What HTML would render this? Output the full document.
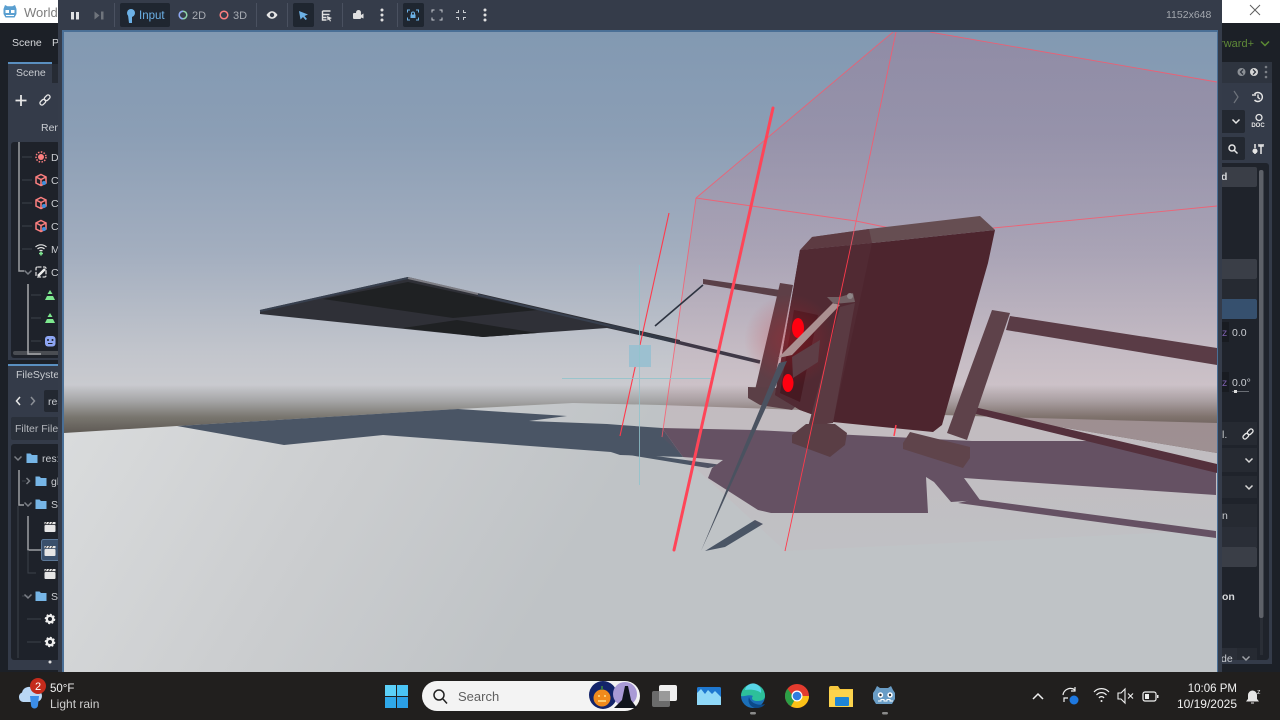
<!DOCTYPE html>
<html><head><meta charset="utf-8"><style>
html,body{margin:0;padding:0;background:#1c2027;width:1280px;height:720px;overflow:hidden}
svg{display:block;position:absolute;left:0;top:0}
text{font-family:"Liberation Sans","DejaVu Sans",sans-serif}
</style></head><body>
<svg width="1280" height="720" viewBox="0 0 1280 720" xmlns="http://www.w3.org/2000/svg">
<defs>
<linearGradient id="sky" x1="0" y1="32" x2="0" y2="433" gradientUnits="userSpaceOnUse">
<stop offset="0" stop-color="#8299b2"/><stop offset=".25" stop-color="#8b9eb5"/><stop offset=".55" stop-color="#a3aebf"/><stop offset=".8" stop-color="#c2c5cc"/><stop offset=".88" stop-color="#c9cacf"/><stop offset=".92" stop-color="#a5a5a6"/><stop offset=".96" stop-color="#79766f"/><stop offset="1" stop-color="#5e5954"/>
</linearGradient>
<linearGradient id="ground" x1="64" y1="410" x2="500" y2="672" gradientUnits="userSpaceOnUse">
<stop offset="0" stop-color="#dadcdd"/><stop offset=".55" stop-color="#cbcdcf"/><stop offset="1" stop-color="#bfc3c6"/>
</linearGradient>
<linearGradient id="tint" x1="0" y1="32" x2="0" y2="551" gradientUnits="userSpaceOnUse">
<stop offset="0" stop-color="#ff2040" stop-opacity=".11"/><stop offset=".7" stop-color="#ff2040" stop-opacity=".05"/><stop offset="1" stop-color="#ff2040" stop-opacity=".015"/>
</linearGradient>
<radialGradient id="glow" cx="790" cy="340" r="46" gradientUnits="userSpaceOnUse">
<stop offset="0" stop-color="#c8202a" stop-opacity=".35"/><stop offset="1" stop-color="#c8202a" stop-opacity="0"/>
</radialGradient>
<clipPath id="vp"><rect x="64" y="32" width="1153" height="640"/></clipPath>
<g id="gear"><circle r="3.2" fill="none" stroke="#eee" stroke-width="2.4"/><circle r="4.5" fill="none" stroke="#eee" stroke-width="1.6" stroke-dasharray="1.8 1.7"/></g>
<g id="clap"><rect x="-5.5" y="-2" width="11" height="7" rx="1" fill="#e6e6e6"/><path d="M-5.5-5h11v2.2h-11z" fill="#e6e6e6"/><path d="M-3.5-5l-1 2.2M-.5-5l-1 2.2M2.5-5l-1 2.2" stroke="#333" stroke-width=".9"/></g>
<g id="cube"><path d="M0-5.5L5-3V3L0 5.5-5 3V-3Z M-5-3L0-.5 5-3M0-.5V5.5" fill="none" stroke="#fc7f7f" stroke-width="1.5"/><circle cx="3" cy="3" r="2" fill="#3f8fdc"/></g>
<path id="folder" d="M-5.5-4.500h4l1.500 1.500h5.500v8h-11z" fill="#76b5e6"/>
<path id="chev" d="M-3.500-1.500L0 2 3.500-1.500" fill="none" stroke-width="1.500"/>
<g id="link" fill="none" stroke="#e6e6e6" stroke-width="1.300"><rect x="-5.500" y="-2" width="6.500" height="4" rx="2" transform="rotate(-45 -2 2) translate(0 2)"/><rect x="-1" y="-2" width="6.500" height="4" rx="2" transform="rotate(-45 2 -2) translate(0 -2)"/></g>
<g id="dots"><circle cy="-5" r="1.500" fill="#e0e0e0"/><circle r="1.500" fill="#e0e0e0"/><circle cy="5" r="1.500" fill="#e0e0e0"/></g>
</defs>

<!-- base -->
<rect width="1280" height="720" fill="#1c2027"/>

<!-- left editor -->
<g>
<rect x="0" y="0" width="60" height="23" fill="#ffffff"/>
<g transform="translate(10,12)"><path d="M-6.500-3l1.500-4 2.500 1.200h5L5-7l1.500 4v5l-2 3.500h-9l-2-3.500z" fill="#5a9fd0"/><rect x="-4.500" y="-2" width="3.500" height="3" fill="#fff"/><rect x="1" y="-2" width="3.500" height="3" fill="#fff"/><path d="M-4 3.500h8" stroke="#fff"/></g>
<text x="24" y="17" font-size="13" fill="#7d7d7d">World.</text>
<text x="12" y="46" font-size="10.500" fill="#d6d8db">Scene</text>
<text x="52" y="46" font-size="10.500" fill="#d6d8db">P</text>
<rect x="8" y="62" width="44" height="2" fill="#5a8fc0"/>
<rect x="8" y="64" width="44" height="19" fill="#343b49"/>
<text x="16" y="76" font-size="10.500" fill="#c9ccd1">Scene</text>
<rect x="52" y="64" width="8" height="19" fill="#262b34"/>
<rect x="8" y="83" width="52" height="277" fill="#343b49"/>
<path d="M21 95v11M15.500 100.500h11" stroke="#e6e6e6" stroke-width="1.800"/>
<use href="#link" x="45" y="100"/>
<text x="41" y="131" font-size="10.500" fill="#c9ccd1">Rem</text>
<rect x="11" y="142" width="49" height="216" rx="3" fill="#1e222a"/>
<rect x="13" y="351" width="47" height="4" rx="2" fill="#4a4d53"/>
<path d="M19 142v129h5" stroke="#9c9ea2" stroke-width="1.500" fill="none"/>
<path d="M28 284v70h13" stroke="#a8a9ad" stroke-width="1.500" fill="none"/>
<path d="M22 157h10M22 180h10M22 203h10M22 226h10M22 249h10M31 295h10M31 318h10M31 341h10" stroke="#3c414b" stroke-width="1"/>
<g transform="translate(41,157)"><circle r="3" fill="#fc7f7f"/><circle r="5" fill="none" stroke="#fc7f7f" stroke-width="1.500" stroke-dasharray="1.500 1.400"/></g>
<use href="#cube" x="41" y="180"/><use href="#cube" x="41" y="203"/><use href="#cube" x="41" y="226"/>
<g transform="translate(41,249)" fill="none" stroke="#e6e6e6" stroke-width="1.200"><path d="M-5.500-2a8 8 0 0 1 11 0M-3.500 0a5 5 0 0 1 7 0M-1.500 2a2 2 0 0 1 3 0"/><path d="M0 2.500v4M-2 4.500h4" stroke="#7de88f" stroke-width="1.600"/></g>
<use href="#chev" x="28" y="272" stroke="#7b7f86"/>
<g transform="translate(41,272)"><rect x="-5" y="-5" width="10" height="10" rx="1.500" fill="none" stroke="#d6d6d6" stroke-width="1.300" stroke-dasharray="4 1.500"/><path d="M-3 4L4-3" stroke="#eee" stroke-width="2.500"/></g>
<path d="M50 290l2.500 4h-5zM45 300h10l-2-4h-6z" fill="#7de88f"/><path d="M50 313l2.500 4h-5zM45 323h10l-2-4h-6z" fill="#7de88f"/>
<rect x="45" y="336" width="10.500" height="10.500" rx="3" fill="#8da5f3"/><circle cx="48" cy="340" r="1" fill="#1e222a"/><circle cx="52.500" cy="340" r="1" fill="#1e222a"/><path d="M48 343.500h4.500" stroke="#1e222a"/>
<text font-size="10.500" fill="#c9ccd1"><tspan x="51" y="161">D</tspan><tspan x="51" y="184">C:</tspan><tspan x="51" y="207">C:</tspan><tspan x="51" y="230">C:</tspan><tspan x="51" y="253">M</tspan><tspan x="51" y="276">Ca</tspan></text>

<rect x="8" y="364" width="52" height="2" fill="#5a8fc0"/>
<rect x="8" y="366" width="52" height="304" fill="#343b49"/>
<text x="16" y="378" font-size="10.500" fill="#c9ccd1">FileSyster</text>
<path d="M20 397l-3.500 4 3.500 4" fill="none" stroke="#e6e6e6" stroke-width="1.500"/>
<path d="M31 397l3.500 4-3.500 4" fill="none" stroke="#8b8f96" stroke-width="1.500"/>
<rect x="44" y="390" width="16" height="22" rx="2" fill="#232831"/>
<text x="48" y="405" font-size="10.500" fill="#c9ccd1">res</text>
<rect x="11" y="417" width="49" height="23" rx="2" fill="#2a303a"/>
<text x="15" y="432" font-size="10.500" fill="#b5b8bd">Filter Files</text>
<rect x="11" y="444" width="49" height="216" rx="3" fill="#1e222a"/>
<path d="M19 470v35h5M28 516v34h14" fill="none" stroke="#9c9ea2" stroke-width="1.500"/>
<path d="M18 506v152M28 550v23h8M22 481h4M22 596h6M27 619h14M27 642h14" fill="none" stroke="#3c414b"/>
<use href="#chev" x="18" y="458" stroke="#7b7f86"/>
<use href="#folder" x="32" y="458"/>
<text x="42" y="462" font-size="10.500" fill="#c9ccd1">res:</text>
<path d="M26.500 478l3 3-3 3" fill="none" stroke="#7b7f86" stroke-width="1.500"/>
<use href="#folder" x="41" y="481"/><text x="51" y="485" font-size="10.500" fill="#c9ccd1">gl</text>
<use href="#chev" x="28" y="504" stroke="#7b7f86"/><use href="#folder" x="41" y="504"/><text x="51" y="508" font-size="10.500" fill="#c9ccd1">Sc</text>
<rect x="41.500" y="539.500" width="18" height="21" rx="2" fill="#3a506c" stroke="#5c7898"/>
<use href="#clap" x="50" y="527"/><use href="#clap" x="50" y="551"/><use href="#clap" x="50" y="574"/>
<use href="#chev" x="28" y="596" stroke="#7b7f86"/><use href="#folder" x="41" y="596"/><text x="51" y="600" font-size="10.500" fill="#c9ccd1">Sc</text>
<use href="#gear" x="50" y="619"/><use href="#gear" x="50" y="642"/><circle cx="50" cy="662" r="1.500" fill="#ddd"/>
</g>

<!-- right editor -->
<g>
<rect x="1220" y="0" width="60" height="23" fill="#ffffff"/>
<path d="M1250 5l10 10M1260 5l-10 10" stroke="#5f5f5f" stroke-width="1"/>
<text x="1254" y="47" font-size="11" fill="#5f8a38" text-anchor="end">rward+</text>
<path d="M1261 41.500l4 4 4-4" fill="none" stroke="#5c8a33" stroke-width="1.500"/>
<rect x="1218" y="62" width="54" height="21" fill="#2e343f"/>
<circle cx="1241.500" cy="72" r="4" fill="#8c9096"/><circle cx="1254" cy="72" r="4" fill="#d6d6d6"/>
<path d="M1243 69.500l-2.500 2.500 2.500 2.500" stroke="#2e343f" stroke-width="1.300" fill="none"/><path d="M1253 69.500l2.500 2.500-2.500 2.500" stroke="#2e343f" stroke-width="1.300" fill="none"/>
<g transform="translate(1266,72)"><circle cy="-5" r="1.300" fill="#7b7f86"/><circle r="1.300" fill="#7b7f86"/><circle cy="5" r="1.300" fill="#7b7f86"/></g>
<rect x="1218" y="83" width="54" height="581" fill="#343b49"/>
<path d="M1234 91l4 6-4 6" fill="none" stroke="#6e737c" stroke-width="1.200"/>
<g transform="translate(1258,97)" fill="none" stroke="#e6e6e6" stroke-width="1.400"><path d="M-3.500-3a4.500 4.500 0 1 1 0 6M0-2.500V.5l2 1.500"/><path d="M-6-2h4" /></g>
<rect x="1218" y="110" width="27" height="23" rx="2" fill="#232831"/>
<use href="#chev" x="1236" y="121" stroke="#e6e6e6"/>
<g transform="translate(1258,121)"><circle cx="1" cy="-3.500" r="3" fill="none" stroke="#e6e6e6" stroke-width="1.300"/><text x="0" y="6" font-size="6" font-weight="bold" fill="#e6e6e6" text-anchor="middle">DOC</text></g>
<rect x="1218" y="137" width="27" height="23" rx="2" fill="#232831"/>
<g transform="translate(1233,149)" fill="none" stroke="#e6e6e6" stroke-width="1.500"><circle cx="-1" cy="-1" r="3"/><path d="M1 1l3.500 3.500"/></g>
<g transform="translate(1258,149)" fill="none" stroke="#e6e6e6" stroke-width="1.500"><path d="M-3-5v4M-3 1v4M3-5v10M1-5v2h4v-2"/><circle cx="-3" cy="2" r="1.800" fill="#e6e6e6"/></g>
<rect x="1218" y="163" width="51" height="497" rx="3" fill="#1f232b"/>
<rect x="1259" y="170" width="4.500" height="448" rx="2" fill="#5e6168"/>
<rect x="1260" y="618" width="3" height="37" fill="#2a2e36"/>
<rect x="1218" y="167" width="39" height="20" rx="2" fill="#3a3e47"/>
<text x="1221" y="180" font-size="10.500" font-weight="bold" fill="#d6d8db">d</text>
<rect x="1218" y="259" width="39" height="20" rx="2" fill="#3a3e47"/>
<rect x="1218" y="279" width="39" height="20" fill="#262a32"/>
<rect x="1218" y="299" width="39" height="20" rx="2" fill="#36506e"/>
<rect x="1218" y="322" width="11" height="20" fill="#181b21"/>
<text x="1222" y="336" font-size="10.500" fill="#7c5fae">z</text><text x="1232" y="336" font-size="10.500" fill="#c9ccd1">0.0</text>
<rect x="1218" y="372" width="11" height="20" fill="#181b21"/>
<text x="1222" y="386" font-size="10.500" fill="#7c5fae">z</text><text x="1232" y="386" font-size="10.500" fill="#c9ccd1">0.0°</text>
<path d="M1232 391.500h17" stroke="#6a6e75"/><rect x="1234" y="390" width="3" height="3" fill="#ddd"/>
<rect x="1218" y="422" width="39" height="23" fill="#262a32"/>
<text x="1222" y="438" font-size="10.500" fill="#c9ccd1">l.</text>
<use href="#link" x="1248" y="434"/>
<rect x="1218" y="448" width="39" height="24" fill="#262a32"/><use href="#chev" x="1249" y="460" stroke="#d6d6d6"/>
<rect x="1218" y="476" width="39" height="22" fill="#262a32"/><use href="#chev" x="1249" y="487" stroke="#d6d6d6"/>
<rect x="1218" y="504" width="39" height="23" fill="#262a32"/><text x="1222" y="519" font-size="10.500" fill="#c9ccd1">n</text>
<rect x="1218" y="527" width="39" height="20" fill="#2a2e37"/>
<rect x="1218" y="547" width="39" height="20" rx="2" fill="#3a3e47"/>
<text x="1222" y="600" font-size="10.500" font-weight="bold" fill="#d6d8db">on</text>
<rect x="1218" y="648" width="19" height="12" fill="#2a2e37"/><rect x="1237" y="648" width="20" height="12" fill="#262a32"/>
<text x="1221" y="662" font-size="10.500" fill="#c9ccd1">de</text><use href="#chev" x="1246" y="658" stroke="#9ea1a6"/>
</g>

<!-- game window -->
<rect x="58" y="0" width="1164" height="672" fill="#353c4a"/>
<rect x="62" y="30" width="1156" height="642" fill="#4a6f96"/>
<g clip-path="url(#vp)">
<rect x="64" y="32" width="1153" height="640" fill="url(#sky)"/>
<polygon points="64,433 177,426 458,409 573,403 660,405 1000,417 1217,453 1217,672 64,672" fill="url(#ground)"/>
<polygon points="1000,417 1217,423 1217,453" fill="#9a9495"/>

<!-- blue shadow -->
<polygon points="177,426 284,445 383,435 611,452 620,455 683,457 662,428 620,425 607,424 529,421 567,416 504,412 458,409" fill="#4a5565"/>
<polygon points="611,452 708,468 722,465 700,462 612,450" fill="#4a5565"/>
<polygon points="755,520 763,524 725,547 705,551" fill="#4a5565"/>

<!-- plate -->
<polygon points="260,310 408,277 680,340 680,344 607,328 483,337 260,314" fill="#2f3037"/>
<polygon points="408,282 323,299 453,318 538,310" fill="#1f2123"/>
<polygon points="403,328 457,320 537,333 483,337" fill="#1f2123"/>
<polyline points="260,311 408,278" fill="none" stroke="#38404f" stroke-width="2"/>
<polyline points="408,278 478,294" fill="none" stroke="#7d7d84" stroke-width="2"/>
<polyline points="478,295 610,326" fill="none" stroke="#38404f" stroke-width="2"/>
<polyline points="610,326 760,362" fill="none" stroke="#333a47" stroke-width="3.500"/>

<!-- tint -->
<polygon points="696,198 893,32 930,32 1217,82 1217,530 785,551 662,437" fill="url(#tint)"/>

<!-- purple shadow -->
<polygon points="662,428 754,430 972,441 1098,441 1216,470 1216,495 964,478 980,500 951,502 934,482 926,477 928,513 771,513 758,510 708,478 712,468 723,460 683,457" fill="#655163"/>
<polygon points="975,499 1216,531 1216,538 958,503" fill="#655163"/>

<!-- box lines behind -->
<g fill="none" stroke="#ff5568" stroke-width=".9" stroke-opacity=".8">
<path d="M696 198L893 32M930 32L1217 82M696 198L856 221 890 228M993 228L1217 206M696 198L662 437"/>
<path d="M669 213L620 436" stroke="#ff3a4c" stroke-width="1.100" stroke-opacity="1"/>
</g>

<!-- gizmo -->
<rect x="629" y="345" width="22" height="22" fill="#9cc0d0"/>
<path d="M639.500 265V485M562 378.500H712" stroke="#8fc3cc" stroke-opacity=".8" fill="none"/>

<!-- object back -->
<path d="M703 285L655 326" stroke="#2d3340" stroke-width="1.600"/>
<polygon points="703,279 780,290 780,297 703,284" fill="#5a4048"/>
<polygon points="1010,316 1217,348 1217,365 1006,330" fill="#5a3c46"/>
<polygon points="970,406 1217,464 1217,473 968,412" fill="#54303c"/>
<polygon points="780,283 793,285 773,388 755,390" fill="#5e3f47"/>
<polygon points="748,387 778,388 798,404 792,410 760,405 748,398" fill="#5b3f46"/>
<polygon points="992,310 1010,313 967,440 947,433" fill="#5e424a"/>
<polygon points="903,443 910,432 970,447 970,458 963,468 903,449" fill="#5f444b"/>

<!-- panel -->
<polygon points="800,250 872,243 995,230 988,263 942,425 933,432 833,422 800,410 775,395" fill="#4d252e"/>
<polygon points="800,250 872,243 860,300 833,422 800,410 775,395" fill="#512a33"/>
<polygon points="812,237 869,229 980,216 993,228 995,230 872,243" fill="#664e52"/>
<polygon points="812,237 869,229 872,243 800,250" fill="#5d3b42"/>
<polygon points="794,310 818,315 800,402 780,393" fill="#461a22"/>
<circle cx="790" cy="340" r="46" fill="url(#glow)"/>

<!-- arms -->
<polygon points="792,357 820,340 818,362 793,378" fill="#5e3e46"/>
<ellipse cx="798" cy="328" rx="6" ry="10" fill="#ff0010"/>
<ellipse cx="788" cy="383" rx="5.500" ry="9" fill="#ff0010"/>
<polygon points="840,307 855,303 833,423 808,427" fill="#5a3a42"/>
<polygon points="792,435 806,424 835,424 847,433 845,445 830,457 792,443" fill="#5a3e45"/>
<polygon points="778,358 833,303 840,305 792,355" fill="#ab9091"/>
<polygon points="827,297 840,297 853,293 855,302 834,304" fill="#726064"/>
<circle cx="850" cy="296" r="3" fill="#8e8688"/>
<polygon points="779,363 787,361 701,551" fill="#4a5260"/>
<path d="M850 250L785 551" stroke="#ff3a4c" stroke-width=".9" fill="none"/>
<path d="M896 32L850 250" stroke="#ff5568" stroke-width=".9" stroke-opacity=".85" fill="none"/>
<path d="M896 425L894 436" stroke="#ff4050" stroke-width="1.500" fill="none"/>

<!-- thick red line -->
<path d="M773 108L674 550" stroke="#ff4558" stroke-width="3" stroke-linecap="round" fill="none"/>
</g>

<!-- toolbar -->
<path d="M114.500 3v24M256.500 3v24M287.500 3v24M342.500 3v24M397.500 3v24" stroke="#4a5160"/>
<path d="M71 12h3v7.500h-3zM76 12h3v7.500h-3z" fill="#dfe1e4"/>
<path d="M94.500 11.500l5 4-5 4zM101 11.500h2.500v8H101z" fill="#6f747c"/>
<rect x="120" y="3" width="50" height="24" rx="2" fill="#1f2630"/>
<g fill="#6cb1e6"><circle cx="131" cy="13" r="4"/><path d="M128 15h4v8h-3z"/></g>
<text x="139" y="19" font-size="11.500" fill="#6cb1e6">Input</text>
<circle cx="183" cy="15" r="3.800" fill="none" stroke="#8fd4a8" stroke-width="1.500"/>
<path d="M183 11.200a3.800 3.800 0 0 0-3.800 3.800 3.800 3.800 0 0 0 3.800 3.800" fill="none" stroke="#8da5f3" stroke-width="1.500"/>
<text x="192" y="19" font-size="11" fill="#a8acb3">2D</text>
<circle cx="224" cy="15" r="3.800" fill="none" stroke="#fc7f7f" stroke-width="1.500"/>
<text x="233" y="19" font-size="11" fill="#a8acb3">3D</text>
<path d="M266.500 15c3-5 8-5 11 0-3 5-8 5-11 0z" fill="#e6e6e6"/><circle cx="272" cy="15" r="2.200" fill="#353c4a"/>
<rect x="293" y="3" width="21" height="24" rx="2" fill="#1f2630"/>
<path d="M299 11l9 3.500-3.500 1.500 2.500 3-1.500 1-2.500-3-2.500 2.500z" fill="#6cb1e6"/>
<path d="M322.500 11h8M322.500 11v9h4M322.500 14.500h7M322.500 17.500h4" fill="none" stroke="#e0e0e0" stroke-width="1.400"/><path d="M327 16l5 2-2 1 1 2-1 .5-1-2-1.500 1z" fill="#e0e0e0"/>
<rect x="353" y="13" width="8" height="6" rx="1" fill="#e0e0e0"/><circle cx="358.500" cy="12.500" r="2.500" fill="#e0e0e0"/><path d="M361 15l2.500-1.500v5L361 17.500z" fill="#e0e0e0"/>
<use href="#dots" x="382" y="15"/>
<rect x="403" y="3" width="21" height="24" rx="2" fill="#1f2630"/>
<path d="M407.500 12.500v-2.500h2.500M416 10h2.500v2.500M407.500 17.500v2.500h2.500M416 20h2.500v-2.500" fill="none" stroke="#6cb1e6" stroke-width="1"/><rect x="410.500" y="14.500" width="5" height="3.500" fill="#6cb1e6"/><path d="M411.500 14.500v-1a1.500 1.500 0 0 1 3 0v1" fill="none" stroke="#6cb1e6"/>
<path d="M432 12.500v-2.500h2.500M439.500 10h2.500v2.500M432 17.500v2.500h2.500M439.500 20h2.500v-2.500" fill="none" stroke="#c9ccd1" stroke-width="1"/>
<path d="M456 12.500h2.500v-2.500M463.500 10v2.500h2.500M456 17.500h2.500v2.500M463.500 20v-2.500h2.500" fill="none" stroke="#c9ccd1" stroke-width="1"/>
<use href="#dots" x="485" y="15"/>
<text x="1166" y="18" font-size="10.500" fill="#a3a7ae">1152x648</text>

<!-- taskbar -->
<rect x="0" y="672" width="1280" height="48" fill="#211f1e"/>
<g>
<path d="M23 702a5 5 0 0 1-1-9.500 7 7 0 0 1 13-2 5.500 5.500 0 0 1 7 5.500 6 6 0 0 1-5 6z" fill="#b9d7f5"/>
<path d="M30 696h9l-1 9a3.500 3.500 0 0 1-7 0z" fill="#3b8de8"/>
<circle cx="38" cy="686" r="8" fill="#c42b1c"/>
<text x="38" y="690" font-size="11" fill="#fff" text-anchor="middle">2</text>
<text x="50" y="692" font-size="11.500" fill="#f2f2f2">50°F</text>
<text x="50" y="708" font-size="12" fill="#cfcfcf">Light rain</text>
<rect x="385" y="685" width="11" height="11" fill="#5cd0f8"/><rect x="397" y="685" width="11" height="11" fill="#4ac4f5"/>
<rect x="385" y="697" width="11" height="11" fill="#2fa8ea"/><rect x="397" y="697" width="11" height="11" fill="#2b9fe6"/>
<rect x="422" y="681" width="218" height="30" rx="15" fill="#f3f3f3"/>
<circle cx="439" cy="695" r="5" fill="none" stroke="#222" stroke-width="1.500"/><path d="M443 699l4 4.500" stroke="#222" stroke-width="1.500"/>
<text x="458" y="701" font-size="13" fill="#5f5f5f">Search</text>
<circle cx="603" cy="695" r="14" fill="#13246a"/>
<circle cx="625" cy="694" r="12" fill="#a99ad6"/>
<path d="M614 708l8-8 3-14 3 0 3 14 6 8z" fill="#10141c"/>
<circle cx="602" cy="698" r="8.500" fill="#f08a1d"/><path d="M598 696h2M604 696h2M598 701h8" stroke="#ffe08a" stroke-width="1.500"/>
<path d="M602 690v-4" stroke="#3f8a3a" stroke-width="1.500"/>
<rect x="652" y="691" width="18" height="16" rx="2" fill="#6b6b6b"/>
<rect x="659" y="685" width="18" height="16" rx="2" fill="#f0f0f0"/>
<rect x="659" y="691" width="11" height="10" fill="#9a9a9a"/>
<rect x="697" y="687" width="24" height="18" rx="1.500" fill="#1f78d0"/>
<path d="M697 702v-9l4-4 4 5 3-4 4 4 3-3 6 6v8h-24z" fill="#8fd8f8"/>
<circle cx="753" cy="696" r="12" fill="#1b6fb8"/>
<path d="M741 696a12 12 0 0 1 24 0c0 4-4 5-8 5-5 0-6-3-4-5-5-2-8 1-12 0z" fill="#2dc09a"/>
<path d="M745 690a8 8 0 0 1 16 3c-3-3-10-4-16-3z" fill="#58d6e8"/>
<path d="M749 697c-2 6 2 11 8 11 3 0 6-1 8-4-6 2-14 0-16-7z" fill="#0c4a8a"/>
<rect x="750" y="712" width="6" height="2.500" rx="1.200" fill="#8b8b8b"/>
<circle cx="797" cy="696" r="12" fill="#e33b2e"/>
<path d="M797 696L786.600 702A12 12 0 0 1 787.500 688.700L793 696z" fill="#2c9f47"/>
<path d="M797 696l-6 10.400a12 12 0 0 1-4.400-4.400l-1.200-9z" fill="#2c9f47"/>
<path d="M797 696l-6 10.400a12 12 0 0 0 6 1.600c6.600 0 12-5.400 12-12h-12z" fill="#fbc116"/>
<circle cx="797" cy="696" r="5.500" fill="#fff"/><circle cx="797" cy="696" r="4.300" fill="#2f7de0"/>
<path d="M829 688a2 2 0 0 1 2-2h7l2 3h13v18h-24z" fill="#f7c83e"/>
<rect x="829" y="690" width="24" height="17" rx="1" fill="#fcd34d"/>
<rect x="835" y="697" width="14" height="9" rx="1" fill="#1e85d6"/>
<path d="M875 690l2-4 3 2h8l3-2 2 4 2 3v6l-3 5h-16l-3-5v-6z" fill="#6a9dc6"/>
<circle cx="880.500" cy="695" r="2.700" fill="#fff"/><circle cx="890" cy="695" r="2.700" fill="#fff"/>
<circle cx="880.500" cy="695" r="1.200" fill="#333"/><circle cx="890" cy="695" r="1.200" fill="#333"/>
<path d="M878 701h3v-1.500h3v1.500h3v-1.500h3v1.500h3" fill="none" stroke="#fff"/>
<rect x="882" y="712" width="6" height="2.500" rx="1.200" fill="#8b8b8b"/>
<path d="M1033 699l5-5 5 5" fill="none" stroke="#f0f0f0" stroke-width="1.500"/>
<path d="M1063 695a7.500 7.500 0 0 1 12-5M1064 702l0-4 4 0M1075 687v4h-4" fill="none" stroke="#f0f0f0" stroke-width="1.200"/>
<circle cx="1074" cy="700" r="4.500" fill="#1e78e0"/>
<g fill="none" stroke="#f0f0f0" stroke-width="1.200"><path d="M1094 692a10 10 0 0 1 15 0M1096.500 695a6.500 6.500 0 0 1 10 0M1099 698a3 3 0 0 1 5 0"/></g><circle cx="1101.500" cy="701" r="1" fill="#f0f0f0"/>
<path d="M1118 693h3l4-4v14l-4-4h-3z" fill="none" stroke="#f0f0f0" stroke-width="1.100"/><path d="M1128 693.500l5 5M1133 693.500l-5 5" stroke="#f0f0f0" stroke-width="1.100"/>
<rect x="1143" y="692" width="13" height="9" rx="2" fill="none" stroke="#f0f0f0" stroke-width="1.200"/><rect x="1145" y="694" width="4" height="5" fill="#f0f0f0"/><rect x="1157" y="695" width="1.500" height="3" fill="#f0f0f0"/>
<text x="1237" y="692" font-size="11.500" fill="#f2f2f2" text-anchor="end">10:06 PM</text>
<text x="1237" y="708" font-size="12" fill="#f2f2f2" text-anchor="end">10/19/2025</text>
<path d="M1247 701h11l-1.500-2v-4a4 4 0 0 0-8 0v4zM1251 703h3" fill="#e6e6e6" stroke="#e6e6e6"/>
<text x="1257" y="694" font-size="7" fill="#e6e6e6">z</text>
</g>
</svg>
</body></html>
